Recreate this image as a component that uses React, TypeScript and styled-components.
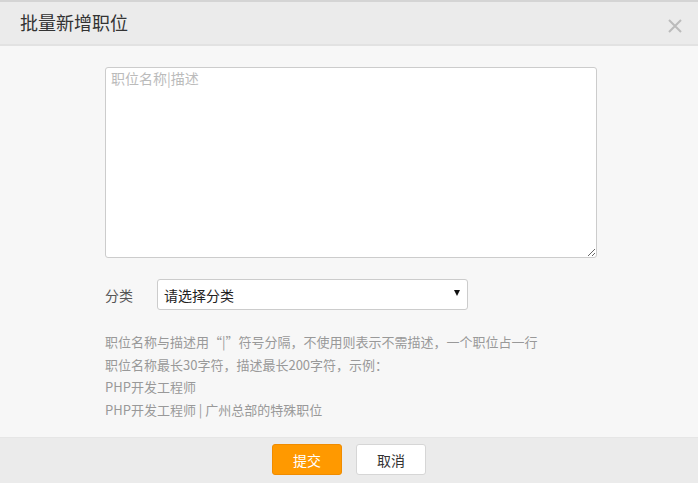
import React from 'react'
import styled, { createGlobalStyle } from 'styled-components'

const GlobalStyle = createGlobalStyle`
  html, body {
    margin: 0;
    padding: 0;
    background: #f7f7f7;
    font-family: "Noto Sans CJK SC", "Liberation Sans", sans-serif;
  }
  * { box-sizing: border-box; }
`

const Dialog = styled.div`
  width: 698px;
  height: 483px;
  display: flex;
  flex-direction: column;
  background: #f7f7f7;
  border-top: 2px solid #d4d4d4;
`

const Header = styled.div`
  height: 44px;
  flex: none;
  display: flex;
  align-items: center;
  justify-content: space-between;
  padding: 0 15px 0 20px;
  background: #ebebeb;
  border-bottom: 2px solid #e2e2e2;
`

const Title = styled.h3`
  margin: 0;
  font-size: 18px;
  font-weight: normal;
  color: #333;
  position: relative;
  top: -1px;
`

const Close = styled.button`
  border: none;
  background: none;
  padding: 0;
  width: 16px;
  height: 16px;
  margin-top: 6px;
  display: flex;
  cursor: pointer;
`

const Body = styled.div`
  flex: 1;
  padding: 21px 101px 0 105px;
  display: flex;
  flex-direction: column;
`

const TextArea = styled.textarea`
  width: 492px;
  height: 191px;
  border: 1px solid #ccc;
  border-radius: 3px;
  background: #fff;
  padding: 0 5px;
  font-family: inherit;
  font-size: 14px;
  line-height: 20px;
  color: #333;
  outline: none;
  &::placeholder { color: #bbb; }
`

const Row = styled.div`
  display: flex;
  align-items: center;
  margin-top: 21px;
`

const Label = styled.span`
  width: 52px;
  font-size: 14px;
  color: #555;
`

const Select = styled.div`
  width: 311px;
  height: 31px;
  border: 1px solid #ccc;
  border-radius: 3px;
  background: #fff;
  display: flex;
  align-items: center;
  justify-content: space-between;
  padding: 0 7px 0 6px;
  font-size: 14px;
  color: #222;
`

const Arrow = styled.span`
  width: 0;
  height: 0;
  border-left: 3.5px solid transparent;
  border-right: 3.5px solid transparent;
  border-top: 6px solid #111;
  margin-top: -3px;
`

const Help = styled.div`
  margin-top: 21px;
  font-size: 13px;
  line-height: 22.5px;
  color: #999;
`

const Footer = styled.div`
  height: 46px;
  flex: none;
  background: #ebebeb;
  border-top: 1px solid #e6e6e6;
  display: flex;
  justify-content: center;
  align-items: flex-start;
  padding-top: 6px;
  gap: 14px;
`

const Button = styled.button<{ $primary?: boolean }>`
  width: 70px;
  height: 31px;
  border-radius: 3px;
  font-family: inherit;
  font-size: 14px;
  cursor: pointer;
  border: 1px solid ${p => (p.$primary ? '#f08c00' : '#d6d6d6')};
  background: ${p => (p.$primary ? '#ff9900' : '#fff')};
  color: ${p => (p.$primary ? '#fff' : '#333')};
`

export default function App() {
  return (
    <>
      <GlobalStyle />
      <Dialog>
        <Header>
          <Title>批量新增职位</Title>
          <Close aria-label="关闭">
            <svg width="16" height="16" viewBox="0 0 16 16">
              <path d="M2 2 L14 14 M14 2 L2 14" stroke="#bbb" strokeWidth="2" />
            </svg>
          </Close>
        </Header>
        <Body>
          <TextArea placeholder="职位名称|描述" />
          <Row>
            <Label>分类</Label>
            <Select>
              <span>请选择分类</span>
              <Arrow />
            </Select>
          </Row>
          <Help>
            <div>职位名称与描述用“|”符号分隔，不使用则表示不需描述，一个职位占一行</div>
            <div>职位名称最长30字符，描述最长200字符，示例：</div>
            <div>PHP开发工程师</div>
            <div>PHP开发工程师 | 广州总部的特殊职位</div>
          </Help>
        </Body>
        <Footer>
          <Button $primary>提交</Button>
          <Button>取消</Button>
        </Footer>
      </Dialog>
    </>
  )
}
